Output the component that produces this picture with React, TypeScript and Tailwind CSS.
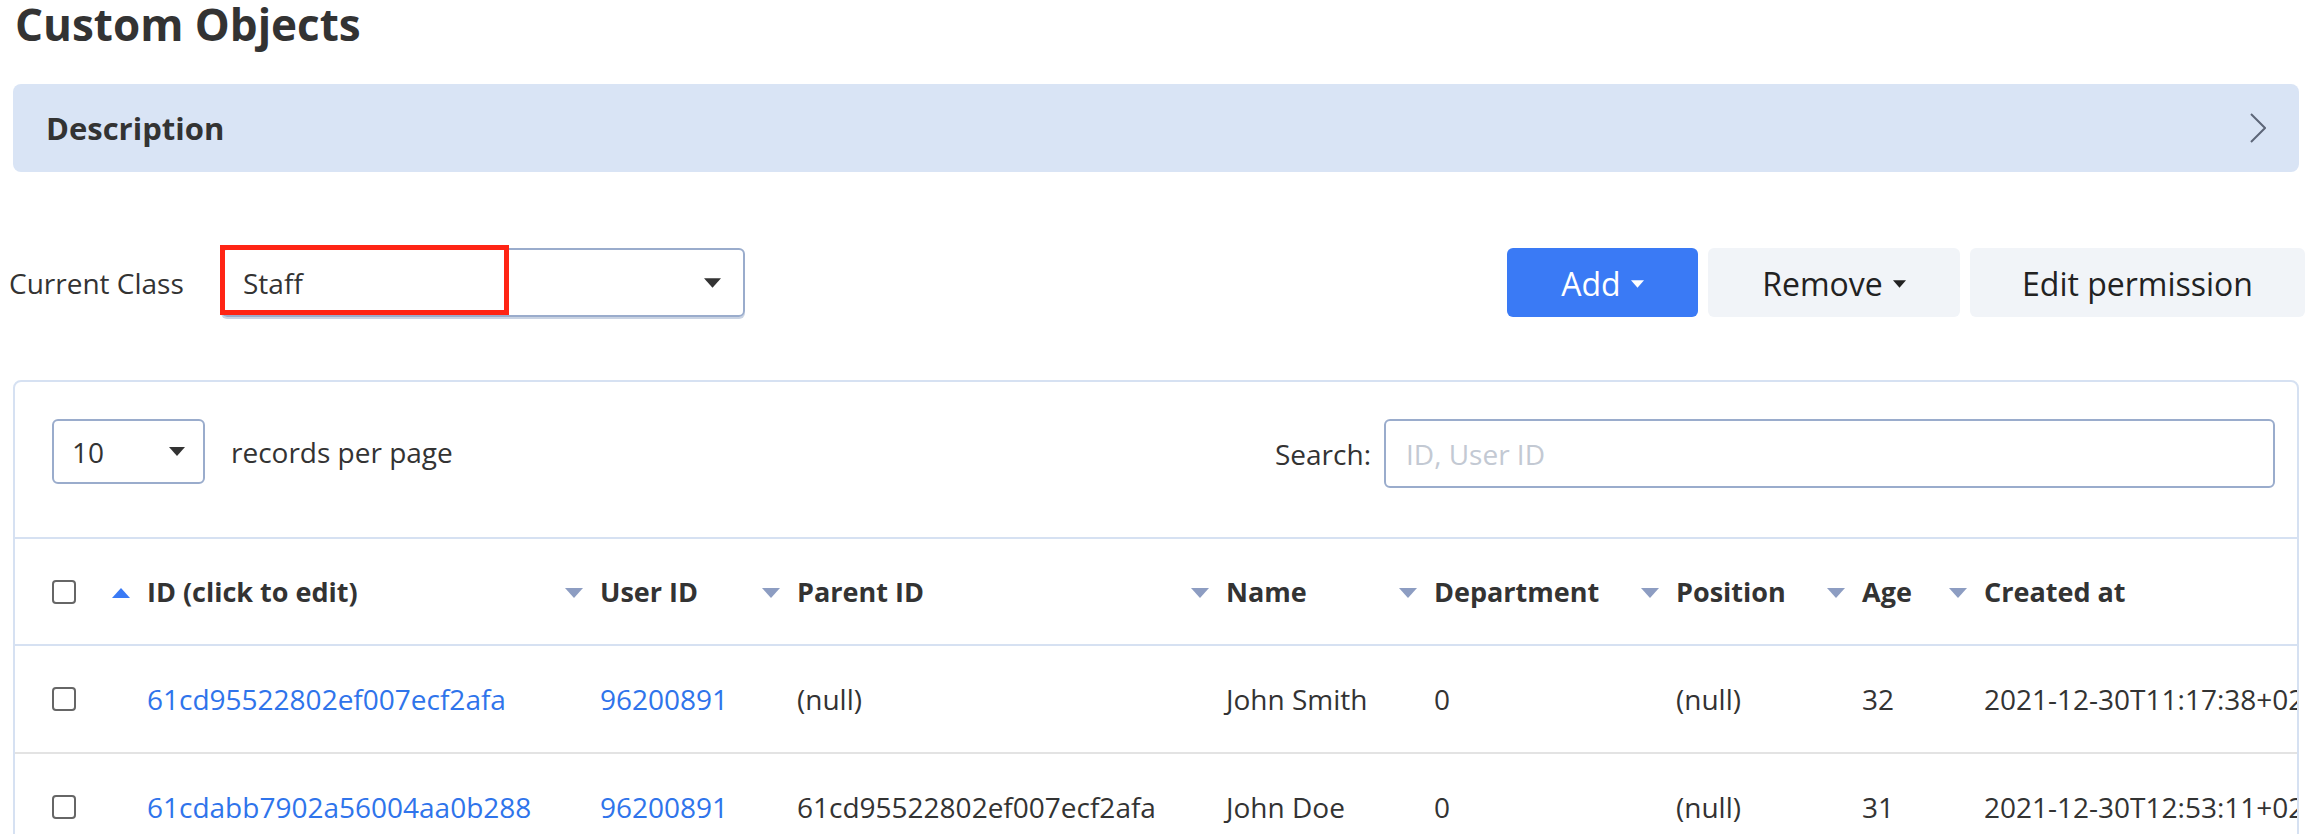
import type { ReactNode } from "react";

const COLS = "grid-cols-[97px_453px_197px_429px_208px_242px_186px_122px_1fr]";

const headers = ["ID (click to edit)", "User ID", "Parent ID", "Name", "Department", "Position", "Age", "Created at"];

const rows = [
  ["61cd95522802ef007ecf2afa", "96200891", "(null)", "John Smith", "0", "(null)", "32", "2021-12-30T11:17:38+02:00"],
  ["61cdabb7902a56004aa0b288", "96200891", "61cd95522802ef007ecf2afa", "John Doe", "0", "(null)", "31", "2021-12-30T12:53:11+02:00"],
];

function Caret({ className = "" }: { className?: string }) {
  return (
    <svg viewBox="0 0 16 9" className={className} fill="currentColor">
      <path d="M0 0h16L8 9z" />
    </svg>
  );
}

function SortArrow({ up }: { up?: boolean }) {
  return (
    <svg viewBox="0 0 18 10" className={`w-[18px] h-[10px] ${up ? "text-[#3a7af5]" : "text-[#8d9dc2]"}`} fill="currentColor">
      {up ? <path d="M9 0l9 10H0z" /> : <path d="M0 0h18L9 10z" />}
    </svg>
  );
}

function Checkbox() {
  return <span className="block size-[24px] rounded-[4px] border-2 border-[#666] bg-white" />;
}

function Cell({ children, className = "" }: { children: ReactNode; className?: string }) {
  return <div className={`flex items-center whitespace-nowrap overflow-hidden ${className}`}>{children}</div>;
}

export default function App() {
  return (
    <div className="w-[2312px] h-[834px] overflow-hidden bg-white text-[#333] font-['Open_Sans',sans-serif]">
      {/* Title */}
      <div className="flex items-end h-[48px]">
        <h1 className="pl-[15px] text-[44px] font-bold leading-[60px] -mb-[6px] text-[#333]">Custom Objects</h1>
      </div>

      {/* Description */}
      <div className="mt-[36px] mx-[13px] h-[88px] rounded-lg bg-[#d9e4f5] flex items-center justify-between pl-[33px] pr-[33px]">
        <span className="text-[31px] font-bold text-[#333]">Description</span>
        <svg viewBox="0 0 16 30" className="w-[16px] h-[30px] text-[#5d6678]" fill="none" stroke="currentColor" strokeWidth="2">
          <path d="M1 1l14 14L1 29" />
        </svg>
      </div>

      {/* Class select + actions */}
      <div className="mt-[76px] flex items-center justify-between pl-[9px] pr-[7px]">
        <div className="flex items-center">
          <span className="text-[28px] text-[#333] w-[212px]">Current Class</span>
          <div className="relative">
            <div className="w-[524px] h-[69px] rounded-md border-2 border-[#9aaccc] shadow-[0_2px_0_#c9d3e3] flex items-center justify-between pl-[20px] pr-[22px]">
              <span className="text-[28px] text-[#333]">Staff</span>
              <Caret className="w-[17px] h-[10px] text-[#333]" />
            </div>
            <div className="absolute -left-[1px] -top-[3px] w-[289px] h-[70px] border-[5px] border-[#ff2414]" />
          </div>
        </div>
        <div className="flex items-center gap-[10px]">
          <button className="w-[191px] h-[69px] rounded-md bg-[#3a7af5] text-white text-[32px] flex items-center justify-center gap-[10px] pt-[3px]">
            Add
            <Caret className="w-[13px] h-[8px] text-white" />
          </button>
          <button className="w-[252px] h-[69px] rounded-md bg-[#f1f4f8] text-[#222] text-[32px] flex items-center justify-center gap-[10px] pt-[3px]">
            Remove
            <Caret className="w-[13px] h-[8px] text-[#222]" />
          </button>
          <button className="w-[335px] h-[69px] rounded-md bg-[#f1f4f8] text-[#222] text-[32px] flex items-center justify-center pt-[3px]">
            Edit permission
          </button>
        </div>
      </div>

      {/* Table card */}
      <div className="mt-[63px] mx-[13px] rounded-lg border-2 border-[#d6e1f2] h-[480px] overflow-hidden">
        <div className="h-[155px] flex items-start justify-between pt-[37px] pl-[37px] pr-[22px]">
          <div className="flex items-center">
            <div className="w-[153px] h-[65px] rounded-md border-2 border-[#9aaccc] flex items-center justify-between pl-[18px] pr-[18px]">
              <span className="text-[28px] text-[#333]">10</span>
              <Caret className="w-[16px] h-[9px] text-[#333]" />
            </div>
            <span className="ml-[26px] text-[28px] text-[#333]">records per page</span>
          </div>
          <div className="flex items-center">
            <span className="text-[28px] text-[#333] mr-[13px]">Search:</span>
            <div className="w-[891px] h-[69px] rounded-md border-2 border-[#9aaccc] flex items-center pl-[20px]">
              <span className="text-[28px] text-[#c3c9d3]">ID, User ID</span>
            </div>
          </div>
        </div>

        <div className={`grid ${COLS} h-[109px] border-y-2 border-[#d6e1f2]`}>
          <Cell className="pl-[37px]">
            <Checkbox />
          </Cell>
          {headers.map((h, i) => (
            <Cell key={h} className="gap-[17px] text-[27px] font-bold text-[#333] pt-[2px]">
              <SortArrow up={i === 0} />
              {h}
            </Cell>
          ))}
        </div>

        {rows.map((r) => (
          <div key={r[0]} className={`grid ${COLS} h-[108px] border-b-2 border-[#e3e3e3]`}>
            <Cell className="pl-[37px]">
              <Checkbox />
            </Cell>
            {r.map((v, i) => (
              <Cell key={i} className={`pl-[35px] text-[28px] ${i < 2 ? "text-[#2f74eb]" : "text-[#333]"}`}>
                {v}
              </Cell>
            ))}
          </div>
        ))}
      </div>
    </div>
  );
}
